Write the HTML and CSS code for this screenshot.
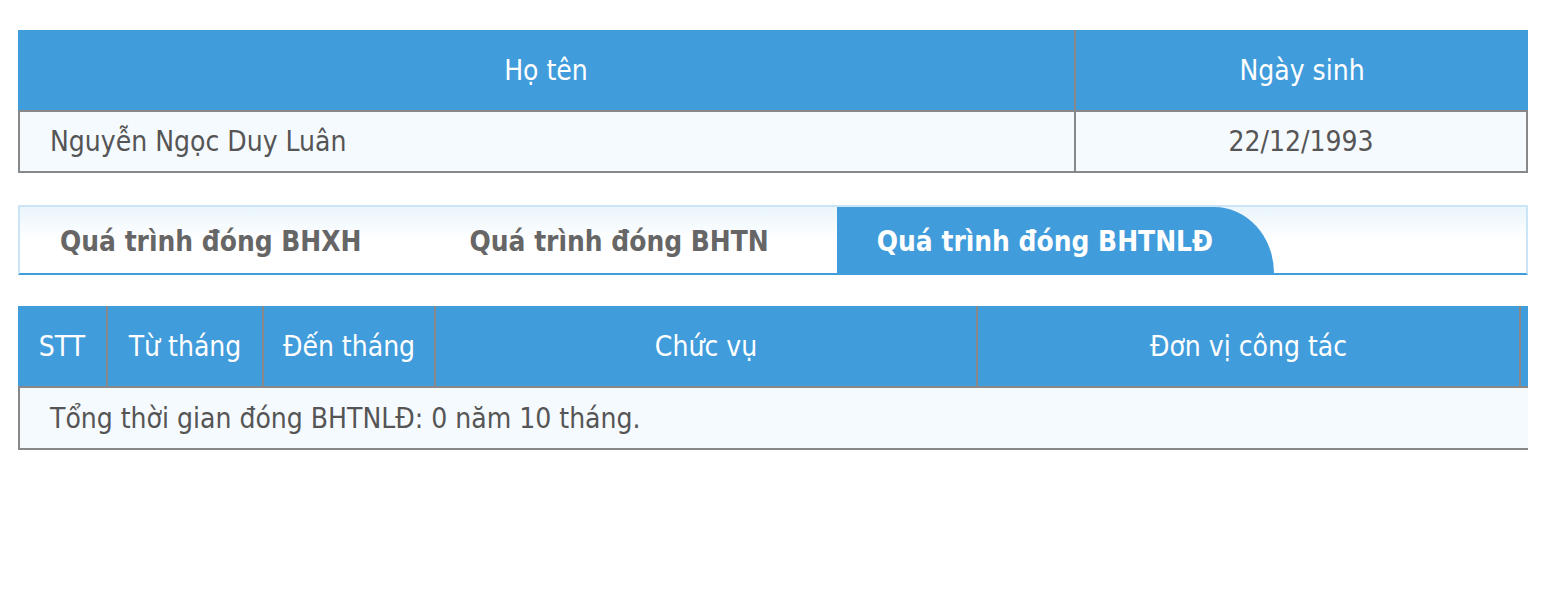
FILE: index.html
```html
<!DOCTYPE html>
<html lang="vi">
<head>
<meta charset="utf-8">
<title>Quá trình đóng BHTNLĐ</title>
<link rel="stylesheet" href="styles.css">
</head>
<body>
<div class="page">
  <table class="grid info">
    <colgroup><col class="c-name"><col class="c-dob"></colgroup>
    <thead>
      <tr><th>Họ tên</th><th class="sep">Ngày sinh</th></tr>
    </thead>
    <tbody>
      <tr><td class="left first">Nguyễn Ngọc Duy Luân</td><td class="center sep last">22/12/1993</td></tr>
    </tbody>
  </table>

  <div class="tabs">
    <div class="tab">Quá trình đóng BHXH</div>
    <div class="tab">Quá trình đóng BHTN</div>
    <div class="tab active">Quá trình đóng BHTNLĐ</div>
  </div>

  <div class="clip">
    <table class="grid history">
      <colgroup>
        <col class="w-stt"><col class="w-from"><col class="w-to"><col class="w-pos"><col class="w-unit"><col class="w-extra">
      </colgroup>
      <thead>
        <tr>
          <th>STT</th>
          <th class="sep">Từ tháng</th>
          <th class="sep">Đến tháng</th>
          <th class="sep">Chức vụ</th>
          <th class="sep">Đơn vị công tác</th>
          <th class="sep"></th>
        </tr>
      </thead>
      <tbody>
        <tr><td class="left first" colspan="6">Tổng thời gian đóng BHTNLĐ: 0 năm 10 tháng.</td></tr>
      </tbody>
    </table>
  </div>
</div>
</body>
</html>
```

FILE: styles.css
```css
* { box-sizing: border-box; }

html, body {
  margin: 0;
  padding: 0;
  background: #ffffff;
}

body {
  font-family: "DejaVu Sans Condensed", "DejaVu Sans", Verdana, sans-serif;
  font-stretch: condensed;
  font-size: 28px;
  color: #555555;
}

.page {
  padding: 30px 18px 0 18px;
  width: 1546px;
}

.grid {
  width: 1510px;
  border-collapse: separate;
  border-spacing: 0;
  table-layout: fixed;
}

.grid th {
  background: #419cdc;
  color: #ffffff;
  font-weight: normal;
  height: 80px;
  padding: 0;
  text-align: center;
  vertical-align: middle;
  white-space: nowrap;
}

.grid th.sep {
  border-left: 2px solid #888888;
}

.grid td {
  background: #f5faff;
  height: 63px;
  padding: 0;
  border-top: 2px solid #888888;
  border-bottom: 2px solid #888888;
  vertical-align: middle;
  white-space: nowrap;
}

.grid td.first { border-left: 2px solid #888888; }
.grid td.sep { border-left: 2px solid #888888; }
.grid td.last { border-right: 2px solid #888888; }

.grid td.left { padding-left: 30px; }
.grid td.center { text-align: center; }

.c-name { width: 1056px; }
.c-dob { width: 454px; }

/* Tabs */
.tabs {
  margin-top: 32px;
  height: 70px;
  display: flex;
  align-items: stretch;
  gap: 10px;
  border: 2px solid #c9e5f7;
  border-bottom: 2px solid #419cdc;
  background: linear-gradient(to bottom, #eaf5fc 0%, #ffffff 50%, #ffffff 100%);
}

.tab {
  display: flex;
  align-items: center;
  padding: 3px 58px 0 40px;
  font-size: 27.8px;
  font-weight: bold;
  color: #666666;
  white-space: nowrap;
}

.tab.active {
  background: #419cdc;
  color: #ffffff;
  padding-right: 61px;
  border-top-right-radius: 60px 66px;
}

/* History table */
.clip {
  margin-top: 31px;
  width: 1510px;
}

.history td { height: 64px; }

.w-stt { width: 88px; }
.w-from { width: 156px; }
.w-to { width: 172px; }
.w-pos { width: 542px; }
.w-unit { width: 543px; }
.w-extra { width: 9px; }
```
